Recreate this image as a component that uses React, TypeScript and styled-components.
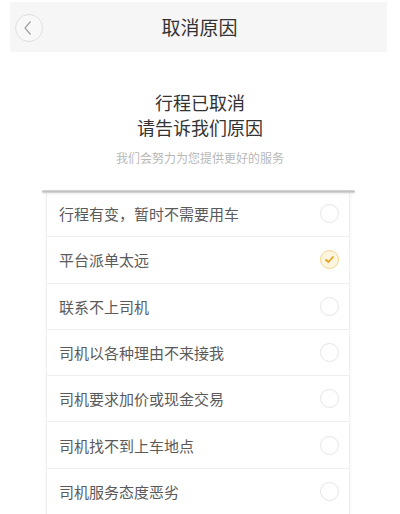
import styled, { createGlobalStyle } from 'styled-components'

const reasons = [
  '行程有变，暂时不需要用车',
  '平台派单太远',
  '联系不上司机',
  '司机以各种理由不来接我',
  '司机要求加价或现金交易',
  '司机找不到上车地点',
  '司机服务态度恶劣',
]

const GlobalStyle = createGlobalStyle`
  body {
    margin: 0;
    background: #fff;
    font-family: "Noto Sans CJK SC", "Noto Sans", sans-serif;
  }
`

export default function App() {
  return (
    <Page>
      <GlobalStyle />
      <Header>
        <BackButton>
          <svg width="10" height="16" viewBox="0 0 10 16">
            <path d="M7.5 1.5 L2 8 L7.5 14.5" fill="none" stroke="#a0a0a0" strokeWidth="1.2" />
          </svg>
        </BackButton>
        <HeaderTitle>取消原因</HeaderTitle>
      </Header>
      <Heading>
        行程已取消
        <br />
        请告诉我们原因
      </Heading>
      <Subtitle>我们会努力为您提供更好的服务</Subtitle>
      <CardWrap>
        <Slot />
        <Card>
          {reasons.map((r, i) => (
            <Row key={r}>
              <RowText>{r}</RowText>
              <Radio checked={i === 1}>
                {i === 1 && (
                  <svg width="11" height="9" viewBox="0 0 11 9">
                    <path d="M1.5 4.5 L4.3 7 L9.5 1.5" fill="none" stroke="#e3a323" strokeWidth="1.8" />
                  </svg>
                )}
              </Radio>
            </Row>
          ))}
        </Card>
      </CardWrap>
    </Page>
  )
}

const Page = styled.div`
  width: 400px;
  height: 514px;
  overflow: hidden;
  background: #fff;
`

const Header = styled.div`
  position: relative;
  display: flex;
  align-items: center;
  justify-content: center;
  width: 377px;
  height: 50px;
  margin: 2px 0 0 10px;
  background: #f6f6f6;
`

const BackButton = styled.div`
  position: absolute;
  left: 5px;
  top: 12px;
  width: 26px;
  height: 26px;
  border: 1px solid #e0e0e0;
  border-radius: 50%;
  display: flex;
  align-items: center;
  justify-content: center;
  padding-right: 2px;
  box-sizing: content-box;
  width: 24px;
  background: #f8f8f8;
`

const HeaderTitle = styled.div`
  font-size: 19px;
  color: #333;
  margin-left: 2px;
  margin-top: -2px;
`

const Heading = styled.div`
  margin-top: 38px;
  text-align: center;
  font-size: 18px;
  line-height: 25px;
  color: #333;
`

const Subtitle = styled.div`
  margin-top: 10px;
  text-align: center;
  font-size: 12px;
  line-height: 16px;
  color: #b8b8b8;
`

const CardWrap = styled.div`
  position: relative;
  margin: 25px 0 0 46px;
  width: 304px;
`

const Slot = styled.div`
  position: absolute;
  left: -4px;
  right: -5px;
  top: -1px;
  height: 3px;
  border-radius: 2px;
  background: linear-gradient(#dadada, #bdbdbd 60%, #e2e2e2);
  box-shadow: 0 1px 2px rgba(0, 0, 0, 0.08);
`

const Card = styled.div`
  background: #fff;
  box-shadow: 0 0 3px rgba(0, 0, 0, 0.07);
  border-left: 1px solid #f0f0f0;
  border-right: 1px solid #f0f0f0;
`

const Row = styled.div`
  display: flex;
  align-items: center;
  justify-content: space-between;
  height: 45.3px;
  padding: 0 10px 0 12px;
  border-bottom: 1px solid #eeeeee;
`

const RowText = styled.span`
  font-size: 15px;
  color: #5a5a5a;
`

const Radio = styled.span<{ checked?: boolean }>`
  width: 19px;
  height: 19px;
  box-sizing: border-box;
  border-radius: 50%;
  border: 1px solid ${(p) => (p.checked ? '#f3d58e' : '#e6e6e6')};
  background: ${(p) => (p.checked ? '#fdf5df' : '#fff')};
  display: flex;
  align-items: center;
  justify-content: center;
`
